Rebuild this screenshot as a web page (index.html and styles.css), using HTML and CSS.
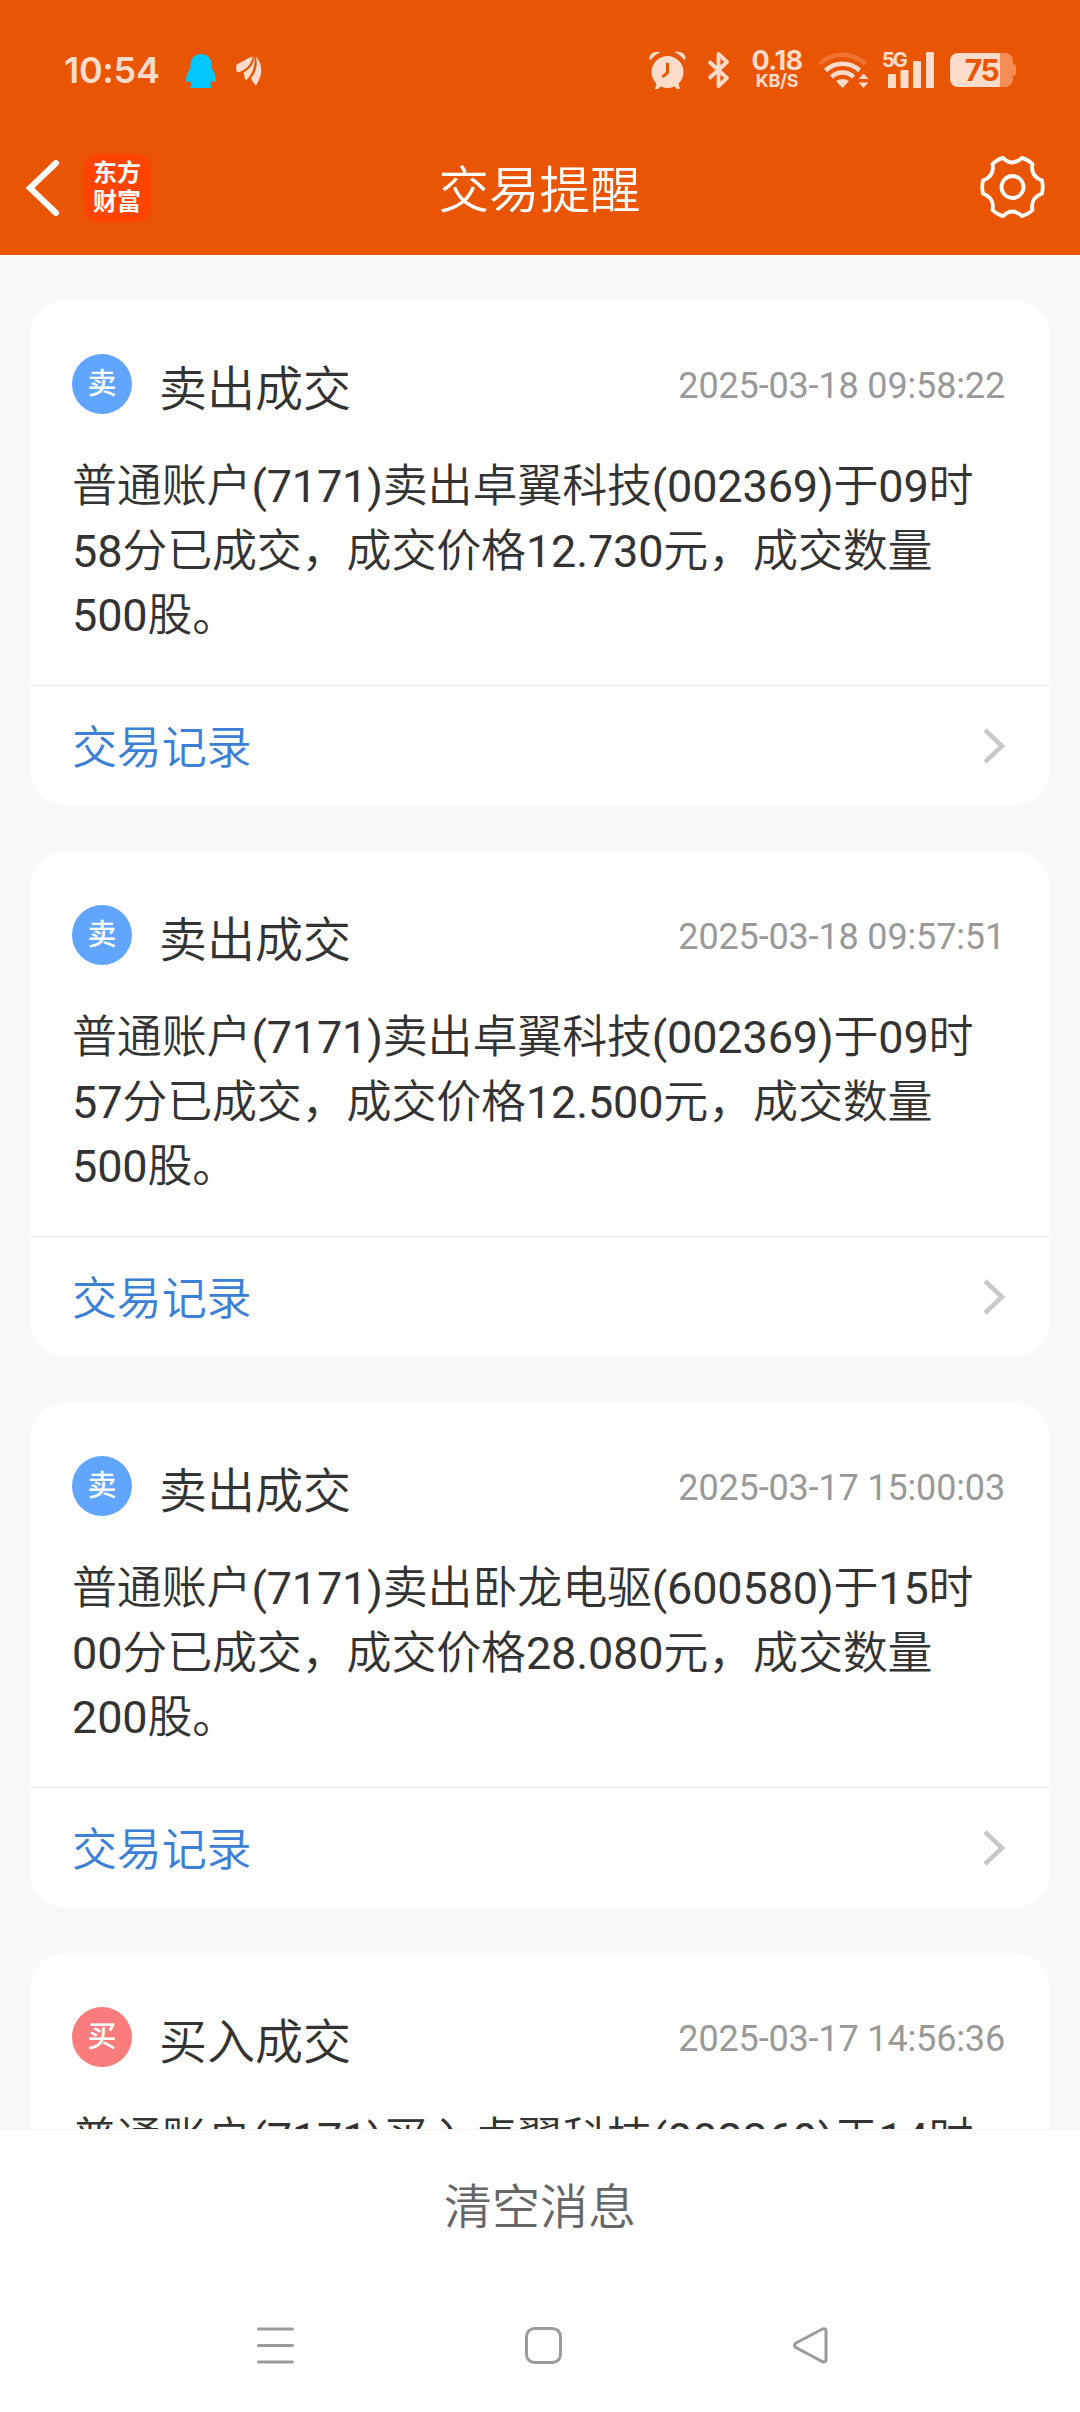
FILE: index.html
```html
<!DOCTYPE html>
<html lang="zh-CN">
<head>
<meta charset="utf-8">
<title>交易提醒</title>
<link rel="stylesheet" href="styles.css">
</head>
<body>
<header class="top">
  <div class="status">
    <span class="clock">10:54</span>
    <svg class="qq" viewBox="0 0 30 34"><path d="M15 0C8 0 4.500 5 4.500 11v3C2 17 0 22 0 26c0 3 1.500 2.500 3.500.500.500 1.800 1.500 3 2.800 4.200C4.500 31.300 4 32.500 4.500 34h21c.500-1.500 0-2.700-1.800-3.300 1.300-1.200 2.300-2.400 2.800-4.200 2 2 3.500 2.500 3.500-.5 0-4-2-9-4.500-12v-3C25.500 5 22 0 15 0z"/></svg>
    <svg class="wing" viewBox="0 0 26 30"><path d="M17 .5C11 2 6 6 .5 8.500Q-.5 12 1 16.500C9 15 15 9 17 .5zM18.200.5C18 8 13 14 7.500 16.500q.5 4.500 2.500 8C16.500 18 20 9 18.200.5zM20 .5C22 10 19.500 17 15 22q1.500 5 5 7.500C26.500 20 27.500 9 20 .5z"/></svg>
    <div class="indicators">
      <svg class="alarm" viewBox="0 0 37 38"><circle cx="18.500" cy="21" r="16"/><path d="M1.500 9.500C-2 5 4-1 11.500 1.200Q5 4 1.500 9.500zM35.500 9.500C39 5 33-1 25.500 1.200Q32 4 35.500 9.500zM8 31l5 3-4 4H6zM29 31l-5 3 4 4h3z"/><path class="hand" d="M18.500 12v9.500l-5 4.500"/></svg>
      <svg class="bt" viewBox="0 0 21 36"><path d="M1 9.500l18 16.500-8.500 8V2L19 10 1 26.500"/></svg>
      <div class="speed"><span class="rate">0.18</span><span class="unit">KB/S</span></div>
      <svg class="wifi" viewBox="0 0 50 36"><path class="faint" d="M1.500 12a33 33 0 0 1 46 0"/><path class="arc" d="M7.500 18.500a25 25 0 0 1 34 0M13.500 25a16 16 0 0 1 22 0"/><path d="M24.500 36l-6.500-7q6.500-4 13 0zM45.500 21.500l5 5.500h-10zM45.500 36l5-5.500h-10z"/></svg>
      <div class="signal"><span class="net">5G</span><svg class="bars" viewBox="0 0 45 36"><rect y="22" width="8" height="14" rx="1"/><rect x="12.500" y="18" width="8" height="18" rx="1"/><rect x="25" y="9" width="8" height="27" rx="1"/><rect x="38" width="8" height="36" rx="1"/></svg></div>
      <div class="battery"><span>75</span></div>
    </div>
  </div>
  <nav class="titlebar">
    <svg class="back" viewBox="0 0 34 56"><path d="M30 3L4 28l26 25"/></svg>
    <div class="logo"><span>东方</span><span>财富</span></div>
    <h1>交易提醒</h1>
    <svg class="gear" viewBox="0 0 63 62"><path d="M22 1.800Q31.500 11 41 1.800Q47 3.500 51.500 8Q49 20 61 24.500Q62.500 31 61 37.500Q49 42 51.500 54Q47 58.500 41 60.200Q31.500 51 22 60.200Q16 58.500 11.500 54Q14 42 2 37.500Q.5 31 2 24.500Q14 20 11.500 8Q16 3.500 22 1.800Z"/><circle cx="31.500" cy="31" r="11"/></svg>
  </nav>
</header>
<main class="list">
  <article class="card">
    <div class="head"><span class="badge sell">卖</span><h2>卖出成交</h2><time>2025-03-18 09:58:22</time></div>
    <p>普通账户(7171)卖出卓翼科技(002369)于09时<br>58分已成交，成交价格12.730元，成交数量<br>500股。</p>
    <a class="more">交易记录<svg viewBox="0 0 22 36"><path d="M2 2l17 16L2 34"/></svg></a>
  </article>
  <article class="card">
    <div class="head"><span class="badge sell">卖</span><h2>卖出成交</h2><time>2025-03-18 09:57:51</time></div>
    <p>普通账户(7171)卖出卓翼科技(002369)于09时<br>57分已成交，成交价格12.500元，成交数量<br>500股。</p>
    <a class="more">交易记录<svg viewBox="0 0 22 36"><path d="M2 2l17 16L2 34"/></svg></a>
  </article>
  <article class="card">
    <div class="head"><span class="badge sell">卖</span><h2>卖出成交</h2><time>2025-03-17 15:00:03</time></div>
    <p>普通账户(7171)卖出卧龙电驱(600580)于15时<br>00分已成交，成交价格28.080元，成交数量<br>200股。</p>
    <a class="more">交易记录<svg viewBox="0 0 22 36"><path d="M2 2l17 16L2 34"/></svg></a>
  </article>
  <article class="card">
    <div class="head"><span class="badge buy">买</span><h2>买入成交</h2><time>2025-03-17 14:56:36</time></div>
    <p>普通账户(7171)买入卓翼科技(002369)于14时</p>
  </article>
</main>
<footer class="bottom">
  <button class="clear">清空消息</button>
  <div class="sysnav">
    <svg viewBox="0 0 37 37"><path d="M1.500 2h34M1.500 18.500h34M1.500 35h34"/></svg>
    <svg viewBox="0 0 37 37"><rect x="1.500" y="1.500" width="34" height="34" rx="8"/></svg>
    <svg viewBox="0 0 37 37"><path d="M30 2.200L4 16q-3 2 0 4.500L30 34.500q4 1.500 4-2V4.200q0-3.500-4-2z"/></svg>
  </div>
</footer>
</body>
</html>
```
FILE: styles.css
```css
* { box-sizing: border-box; margin: 0; padding: 0; }
body {
  width: 1080px;
  height: 2412px;
  overflow: hidden;
  display: flex;
  flex-direction: column;
  background: #f6f8fa;
  color: #333;
  font-family: Roboto, "Noto Sans CJK SC", sans-serif;
}
svg { display: block; flex: none; overflow: visible; }
h1, h2 { font-weight: 350; }

.top { flex: none; height: 255px; background: #ea5504; color: #fff; }
.status {
  height: 140px;
  padding: 0 67px 0 64px;
  display: flex;
  align-items: center;
  color: #fddccb;
  fill: #fddccb;
  font-family: Inter, sans-serif;
  font-weight: 600;
}
.clock { width: 122px; font-size: 36px; letter-spacing: -.3px; white-space: nowrap; }
.qq { width: 30px; height: 34px; margin-top: 2px; fill: #00c8ff; }
.wing { width: 26px; height: 30px; margin-left: 20px; margin-top: 2px; }
.indicators { margin-left: auto; display: flex; align-items: center; height: 38px; }
.alarm { width: 37px; height: 38px; }
.hand { fill: none; stroke: #ea5504; stroke-width: 3; }
.bt { width: 21px; height: 36px; margin-left: 22px; }
.bt path { fill: none; stroke: #fddccb; stroke-width: 3.800; stroke-linejoin: round; }
.speed { width: 52px; margin-left: 22px; display: flex; flex-direction: column; align-items: center; }
.rate { font-size: 27px; height: 20px; line-height: 20px; letter-spacing: -.5px; font-weight: 700; }
.unit { font-size: 18px; height: 18px; line-height: 19px; font-weight: 700; letter-spacing: -.3px; }
.wifi { width: 50px; height: 36px; margin-left: 15px; }
.arc, .faint { fill: none; stroke: #fddccb; stroke-width: 4.500; }
.faint { opacity: .22; }
.signal { position: relative; margin-left: 20px; }
.bars { width: 45px; height: 36px; }
.net { position: absolute; left: -6px; top: -2px; font-size: 20px; line-height: 20px; letter-spacing: -2px; font-weight: 700; }
.battery {
  position: relative;
  width: 63px;
  height: 34px;
  margin-left: 17px;
  border-radius: 8px;
  background: linear-gradient(to right, #fddccb 50px, #f38c55 50px);
  color: #ea5504;
  display: flex;
  align-items: center;
  justify-content: center;
  font-size: 30px;
  font-weight: 700;
  letter-spacing: -1.500px;
}
.battery::after { content: ""; position: absolute; right: -3px; top: 11px; width: 3px; height: 12px; border-radius: 0 3px 3px 0; background: #f38c55; }
.titlebar { height: 115px; padding: 0 36px 0 26px; display: flex; align-items: center; }
.back { width: 34px; height: 56px; margin-bottom: 20px; }
.back path { fill: none; stroke: #fff; stroke-width: 6; stroke-linecap: round; }
.logo {
  width: 68px;
  height: 68px;
  margin: 0 0 20px 23px;
  border-radius: 14px;
  background: #ff4400;
  display: flex;
  flex-direction: column;
  align-items: center;
  justify-content: center;
  font-size: 24px;
  font-weight: 700;
  line-height: 29px;
}
.titlebar h1 { flex: 1; padding-right: 53px; text-align: center; font-size: 50.500px; line-height: 70px; margin-bottom: 13px; }
.gear { width: 63px; height: 62px; margin-bottom: 22px; }
.gear path, .gear circle { fill: none; stroke: #fff; stroke-width: 3.800; }

.list { flex: none; height: 1874px; overflow: hidden; padding: 45px 30px 0; display: flex; flex-direction: column; gap: 45px; }
.card { flex: none; height: 506px; border-radius: 36px; background: #fff; display: flex; flex-direction: column; }
.head { height: 155px; padding: 24px 45px 0 42px; display: flex; align-items: flex-start; }
.badge { width: 60px; height: 60px; margin-top: 30px; border-radius: 50%; color: #fff; font-size: 29px; line-height: 61px; font-weight: 500; text-align: center; }
.sell { background: #60a5ff; }
.buy { background: #fb7c7c; }
.head h2 { margin: 36px 0 0 27px; font-size: 48px; line-height: 60px; }
.head time { margin: 40px 0 0 auto; font-size: 36px; line-height: 44px; letter-spacing: -.15px; color: #999; }
.card p { height: 230px; padding: 0 42px; font-family: Roboto, "Noto Sans CJK SC DemiLight", "Noto Sans CJK SC", sans-serif; font-size: 45px; line-height: 64.500px; letter-spacing: -.15px; white-space: nowrap; }
.more { flex: 1; border-top: 1px solid #ebebeb; padding: 0 45px 3px 42px; display: flex; align-items: center; justify-content: space-between; font-size: 45px; font-weight: 350; letter-spacing: -.15px; color: #3b80d6; }
.more svg { width: 22px; height: 36px; margin-top: 2px; }
.more path { fill: none; stroke: #c8c8c8; stroke-width: 4.500; }

.bottom { flex: 1; background: #fff; border-top: 1px solid #f2f3f5; }
.clear { display: block; width: 100%; height: 154px; padding-bottom: 8px; border: 0; background: none; font: 350 48px "Noto Sans CJK SC", sans-serif; color: #666; }
.sysnav { display: flex; justify-content: space-between; padding: 43px 251px 0 257px; }
.sysnav svg { width: 37px; height: 37px; fill: none; stroke: #9b9b9b; stroke-width: 3; stroke-linecap: round; }
```
